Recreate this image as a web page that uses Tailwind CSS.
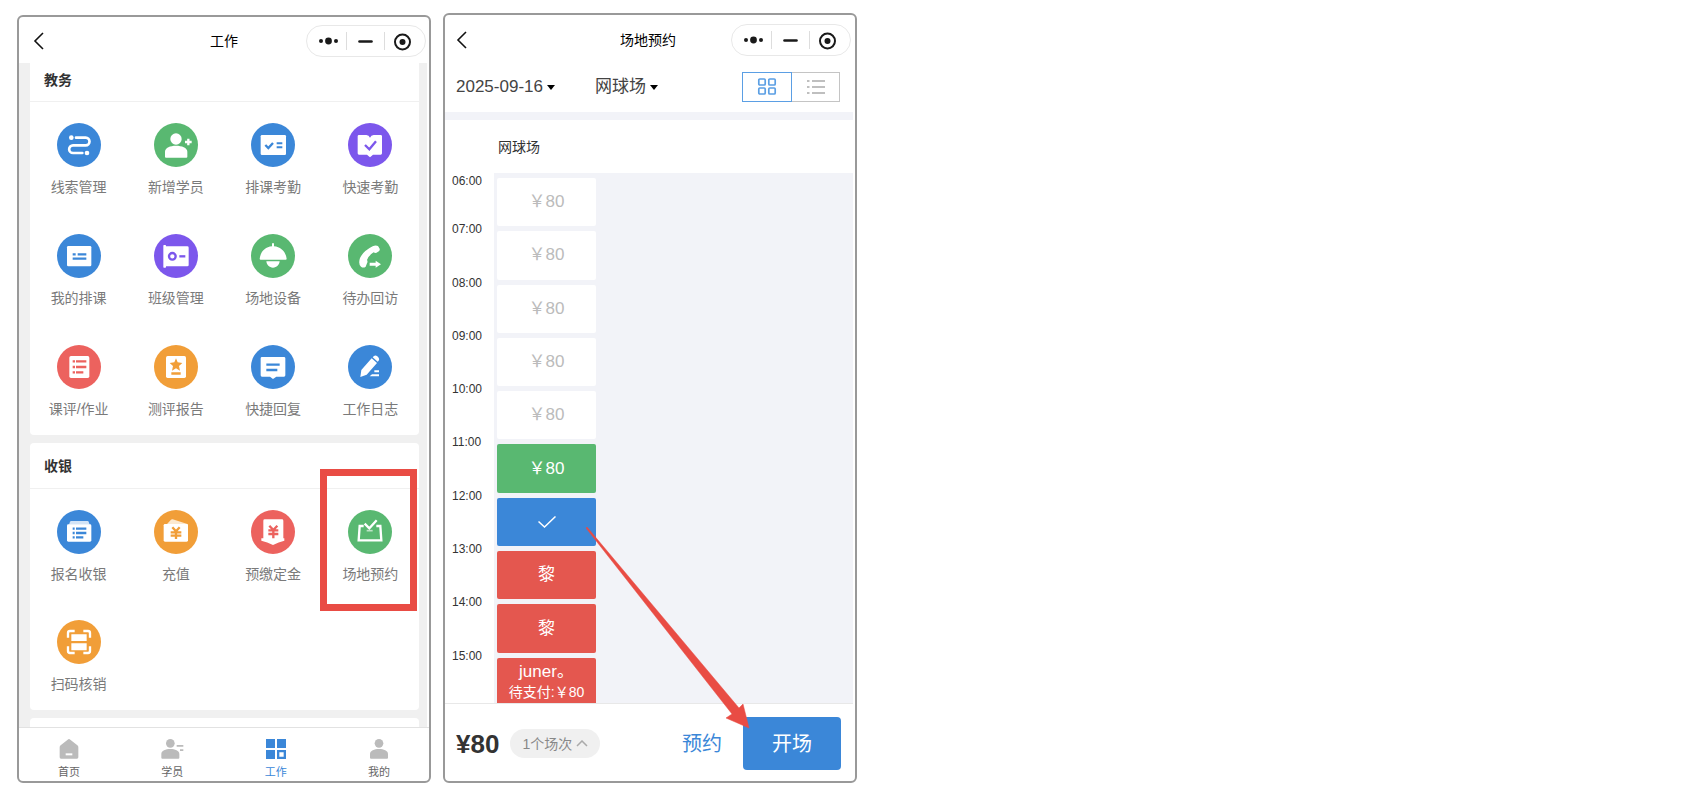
<!DOCTYPE html>
<html lang="zh-CN">
<head>
    <meta charset="UTF-8">
    <meta name="viewport" content="width=device-width, initial-scale=1.0">
    <title>场地预约</title>
    <script src="https://cdn.jsdelivr.net/npm/@tailwindcss/browser@4"></script>
</head>
<body class="bg-white font-['Liberation_Sans','Noto_Sans_CJK_SC',sans-serif] text-[#333]">
<main class="flex h-screen gap-3 pt-[13px] pb-[15px] pl-[17px]">

    <!-- work page -->
    <section class="mt-0.5 flex w-full max-w-[414px] flex-col overflow-hidden rounded-md border-2 border-[#999] bg-white">
        <header class="grid h-[46px] shrink-0 grid-cols-[1fr_auto_1fr] items-center px-[3px] pt-0.5">
            <button aria-label="返回" class="ml-[11px] justify-self-start">
                <svg class="h-[18px] w-3" viewBox="0 0 12 18" fill="none" stroke="#111" stroke-width="1.6"><path d="M10 1 2 9l8 8"/></svg>
            </button>
            <h1 class="text-sm text-black">工作</h1>
            <div class="flex h-8 w-[120px] items-center justify-self-end rounded-full border border-[#e8e8e8]">
                <svg class="w-full" viewBox="0 0 118 30" fill="#1a1a1a"><circle cx="14" cy="15" r="2"/><circle cx="21.500" cy="15" r="3.400"/><circle cx="29" cy="15" r="2"/><path d="M39.500 6v18M77.500 6v18" stroke="#ddd"/><path d="M52.500 15.500h12" stroke="#1a1a1a" stroke-width="2.600" stroke-linecap="round"/><circle cx="95.500" cy="16" r="7.500" fill="none" stroke="#1a1a1a" stroke-width="2"/><circle cx="95.500" cy="16" r="3"/></svg>
            </div>
        </header>

        <div class="mr-0.5 flex min-h-0 flex-1 flex-col gap-2 overflow-hidden bg-[#f0f0f0] pr-2 pl-[11px]">
            <div class="shrink-0 rounded-b bg-white pb-4">
                <h2 class="border-b border-[#f0f0f0] px-[14px] pt-[7px] pb-[11px] text-sm leading-5 font-bold">教务</h2>
                <div class="grid grid-cols-4 gap-y-[37px] pt-[21px] text-sm leading-5 text-[#7a7a7a]">
                    <a href="#" class="flex flex-col items-center gap-[10px]">
                        <svg class="size-11" viewBox="0 0 132 132"><circle cx="66" cy="66" r="66" fill="#3b87d8"/><path d="M57 44h29a11.500 11.500 0 0 1 0 23H48a11.500 11.500 0 0 0 0 23h28" fill="none" stroke="#fff" stroke-width="8" stroke-linecap="round"/><circle cx="43" cy="44" r="7" fill="#fff"/><circle cx="90" cy="90" r="7" fill="#fff"/></svg>
                        线索管理
                    </a>
                    <a href="#" class="flex flex-col items-center gap-[10px]">
                        <svg class="size-11" viewBox="0 0 132 132"><circle cx="66" cy="66" r="66" fill="#59b871"/><g fill="#fff"><circle cx="66" cy="48" r="17"/><path d="M33 101V86c0-12 16-18 33-18s34 6 34 18v15q0 3-3 3H36q-3 0-3-3z"/></g><path d="M103 47v20M93 57h20" stroke="#fff" stroke-width="7"/></svg>
                        新增学员
                    </a>
                    <a href="#" class="flex flex-col items-center gap-[10px]">
                        <svg class="size-11" viewBox="0 0 132 132"><circle cx="66" cy="66" r="66" fill="#3b87d8"/><rect x="29" y="36" width="76" height="60" rx="4" fill="#fff"/><path d="m43 66 9 9 14-15" fill="none" stroke="#3b87d8" stroke-width="7"/><path d="M77 61h17M77 73h17" stroke="#3b87d8" stroke-width="6"/></svg>
                        排课考勤
                    </a>
                    <a href="#" class="flex flex-col items-center gap-[10px]">
                        <svg class="size-11" viewBox="0 0 132 132"><circle cx="66" cy="66" r="66" fill="#7c57ec"/><path d="M33 36h22q8 0 11 8 3-8 11-8h21q4 0 4 4v51q0 4-4 4H75l-9 8-9-8H33q-4 0-4-4V40q0-4 4-4z" fill="#fff"/><path d="m51 66 13 13 20-24" fill="none" stroke="#7c57ec" stroke-width="7"/></svg>
                        快速考勤
                    </a>
                    <a href="#" class="flex flex-col items-center gap-[10px]">
                        <svg class="size-11" viewBox="0 0 132 132"><circle cx="66" cy="66" r="66" fill="#3b87d8"/><rect x="30" y="36" width="73" height="61" rx="4" fill="#fff"/><path d="M47 61h9M62 61h26M47 74h41" stroke="#3b87d8" stroke-width="7"/></svg>
                        我的排课
                    </a>
                    <a href="#" class="flex flex-col items-center gap-[10px]">
                        <svg class="size-11" viewBox="0 0 132 132"><circle cx="66" cy="66" r="66" fill="#7c57ec"/><g fill="#fff"><rect x="32" y="37" width="72" height="60" rx="4"/><rect x="28" y="33" width="8" height="68" rx="2"/></g><circle cx="55" cy="67" r="10" fill="none" stroke="#7c57ec" stroke-width="7"/><path d="M76 67h18" stroke="#7c57ec" stroke-width="7"/></svg>
                        班级管理
                    </a>
                    <a href="#" class="flex flex-col items-center gap-[10px]">
                        <svg class="size-11" viewBox="0 0 132 132"><circle cx="66" cy="66" r="66" fill="#59b871"/><g fill="#fff"><path d="M26 74c3-22 17-35 37-37v-9h6v9c20 2 35 15 38 37q0 3-3 3H29q-3 0-3-3zM46 82h40c-1 11-9 19-20 19s-19-8-20-19z"/></g></svg>
                        场地设备
                    </a>
                    <a href="#" class="flex flex-col items-center gap-[10px]">
                        <svg class="size-11" viewBox="0 0 132 132"><circle cx="66" cy="66" r="66" fill="#59b871"/><g fill="#fff"><path d="M74 37q9-5 16-1l5 8q2 6-6 10-6 5-12 1-15 9-20 23 3 5 0 10l-4 10q-7 5-14 0-9-8-3-26 10-21 38-35z"/><path d="M65 86h18v-6l16 11-16 10v-6H65z"/></g></svg>
                        待办回访
                    </a>
                    <a href="#" class="flex flex-col items-center gap-[10px]">
                        <svg class="size-11" viewBox="0 0 132 132"><circle cx="66" cy="66" r="66" fill="#ec625e"/><rect x="37" y="33" width="60" height="66" rx="5" fill="#fff"/><path d="M47 49h7M57 49h31M47 66h7M57 66h31M47 82h7M57 82h22" stroke="#ec625e" stroke-width="7"/></svg>
                        课评/作业
                    </a>
                    <a href="#" class="flex flex-col items-center gap-[10px]">
                        <svg class="size-11" viewBox="0 0 132 132"><circle cx="66" cy="66" r="66" fill="#f19e38"/><rect x="36" y="33" width="60" height="66" rx="5" fill="#fff"/><path d="m66 40 5 12 14 2-10 9 3 14-12-7-12 7 3-14-10-9 14-2zM52 82h28v7H52z" fill="#f19e38"/></svg>
                        测评报告
                    </a>
                    <a href="#" class="flex flex-col items-center gap-[10px]">
                        <svg class="size-11" viewBox="0 0 132 132"><circle cx="66" cy="66" r="66" fill="#3b87d8"/><path d="M33 36h66q4 0 4 4v51q0 4-4 4H76l-10 7-9-7H33q-4 0-4-4V40q0-4 4-4z" fill="#fff"/><path d="M46 59h40M46 75h33" stroke="#3b87d8" stroke-width="7"/></svg>
                        快捷回复
                    </a>
                    <a href="#" class="flex flex-col items-center gap-[10px]">
                        <svg class="size-11" viewBox="0 0 132 132"><circle cx="66" cy="66" r="66" fill="#3b87d8"/><g fill="#fff"><path d="m37 96 3-21 31-35 16 14-31 35zM74 37l4-4q5-3 10 1l4 4q3 5 0 9l-3 3z"/><path d="M79 76h14v6H79zM72 88h21v6H65z"/></g></svg>
                        工作日志
                    </a>
                </div>
            </div>

            <div class="shrink-0 rounded bg-white pb-4">
                <h2 class="border-b border-[#f0f0f0] px-[14px] pt-[13px] pb-3 text-sm leading-5 font-bold">收银</h2>
                <div class="grid grid-cols-4 gap-y-9 pt-[21px] text-sm leading-5 text-[#7a7a7a]">
                    <a href="#" class="flex flex-col items-center gap-[10px]">
                        <svg class="size-11" viewBox="0 0 132 132"><circle cx="66" cy="66" r="66" fill="#3b87d8"/><path d="m36 44 3-9q1-2 3-2h50q2 0 3 2l3 9z" fill="#d3e4f6"/><rect x="30" y="43" width="73" height="52" rx="4" fill="#fff"/><path d="M47 56h6M57 56h31M47 69h6M57 69h31M47 82h6M57 82h22" stroke="#3b87d8" stroke-width="7"/></svg>
                        报名收银
                    </a>
                    <a href="#" class="flex flex-col items-center gap-[10px]">
                        <svg class="size-11" viewBox="0 0 132 132"><circle cx="66" cy="66" r="66" fill="#f19e38"/><path d="m37 44 14-15q2-2 5-1l44 14 2 6z" fill="#fce9d0"/><rect x="29" y="42" width="73" height="53" rx="4" fill="#fff"/><path d="m55 52 11 12 11-12M66 64v23M50 67h32M50 77h32" fill="none" stroke="#f19e38" stroke-width="7"/></svg>
                        充值
                    </a>
                    <a href="#" class="flex flex-col items-center gap-[10px]">
                        <svg class="size-11" viewBox="0 0 132 132"><circle cx="66" cy="66" r="66" fill="#ec625e"/><path d="M41 28h52q4 0 4 4v53h3v7q-17 4-34 13-17-9-35-13v-7h6V32q0-4 4-4z" fill="#fff"/><path d="m55 47 12 13 12-13M67 60v25M52 61h30M52 72h30" fill="none" stroke="#ec625e" stroke-width="7"/></svg>
                        预缴定金
                    </a>
                    <a href="#" class="relative flex flex-col items-center gap-[10px]">
                        <svg class="size-11" viewBox="0 0 132 132"><circle cx="66" cy="66" r="66" fill="#59b871"/><g fill="none" stroke="#fff"><path d="M47 48H35l-3 43h68l-3-43H85" stroke-width="7"/><path d="m50 41 14 14 22-24" stroke-width="7"/><path d="M56 62h18" stroke-width="5" opacity=".6"/></g></svg>
                        场地预约
                        <!-- highlight frame -->
                        <span class="absolute -top-[41px] right-0.5 h-[142px] w-[97px] border-7 border-[#e94c44]"></span>
                    </a>
                    <a href="#" class="flex flex-col items-center gap-[10px]">
                        <svg class="size-11" viewBox="0 0 132 132"><circle cx="66" cy="66" r="66" fill="#f19e38"/><g fill="none" stroke="#fff" stroke-width="7"><path d="M33 53V39q0-6 6-6h14M79 33h14q6 0 6 6v14M99 79v14q0 6-6 6H79M53 99H39q-6 0-6-6V79"/></g><path d="M43 43h46v20H43zM43 70h46v21H43z" fill="#fff"/></svg>
                        扫码核销
                    </a>
                </div>
            </div>

            <div class="h-4 shrink-0 rounded-t bg-white"></div>
        </div>

        <nav class="flex h-[54px] shrink-0 justify-between border-t border-[#e2e2e2] px-[38px] pt-[11px] text-[11px] leading-4 text-[#666]">
            <a href="#" class="flex w-6 flex-col items-center gap-[5px]">
                <svg class="h-5 w-6 shrink-0" viewBox="0 0 72 60"><path d="M32 2q4-4 8 0l21 17q3 2 3 6v30q0 4-4 4H12q-4 0-4-4V25q0-4 3-6z" fill="#bbb"/><path d="M26 46h20" stroke="#fff" stroke-width="6"/></svg>
                首页
            </a>
            <a href="#" class="flex w-6 flex-col items-center gap-[5px]">
                <svg class="h-5 w-6 shrink-0" viewBox="0 0 72 60" fill="#bbb"><circle cx="31" cy="13" r="13"/><path d="M4 56V45c0-10 13-15 27-15s27 5 27 15v11q0 3-3 3H7q-3 0-3-3zM50 18h20v5H50zM60 31h10v5H60z"/></svg>
                学员
            </a>
            <a href="#" class="flex w-6 flex-col items-center gap-[5px] text-[#3b87d8]">
                <svg class="h-5 w-6 shrink-0" viewBox="0 0 72 60" fill="#3b87d8"><path d="M6 0h27v27H6zM39 0h27v27H39zM6 33h27v27H6z"/><path d="M42.500 36.500h20v20h-20z" fill="#fff" stroke="#3b87d8" stroke-width="7"/></svg>
                工作
            </a>
            <a href="#" class="flex w-6 flex-col items-center gap-[5px]">
                <svg class="h-5 w-6 shrink-0" viewBox="0 0 72 60" fill="#bbb"><circle cx="36" cy="13" r="13"/><path d="M9 56V45c0-10 13-15 27-15s27 5 27 15v11q0 3-3 3H12q-3 0-3-3z"/></svg>
                我的
            </a>
        </nav>
    </section>

    <!-- court booking page -->
    <section class="relative flex w-full max-w-[414px] flex-col overflow-hidden rounded-md border-2 border-[#999] bg-white">
        <header class="grid h-[47px] shrink-0 grid-cols-[1fr_auto_1fr] items-center pt-0.5 pr-1">
            <button aria-label="返回" class="ml-[11px] justify-self-start">
                <svg class="h-[18px] w-3" viewBox="0 0 12 18" fill="none" stroke="#111" stroke-width="1.6"><path d="M10 1 2 9l8 8"/></svg>
            </button>
            <h1 class="text-sm text-black">场地预约</h1>
            <div class="flex h-8 w-[120px] items-center justify-self-end rounded-full border border-[#e8e8e8]">
                <svg class="w-full" viewBox="0 0 118 30" fill="#1a1a1a"><circle cx="14" cy="15" r="2"/><circle cx="21.500" cy="15" r="3.400"/><circle cx="29" cy="15" r="2"/><path d="M39.500 6v18M77.500 6v18" stroke="#ddd"/><path d="M52.500 15.500h12" stroke="#1a1a1a" stroke-width="2.600" stroke-linecap="round"/><circle cx="95.500" cy="16" r="7.500" fill="none" stroke="#1a1a1a" stroke-width="2"/><circle cx="95.500" cy="16" r="3"/></svg>
            </div>
        </header>

        <div class="mr-0.5 flex shrink-0 items-center border-b-8 border-[#f2f3f8] pt-[10px] pr-[13px] pb-[10px] pl-[11px] text-[17px] leading-[30px] text-[#444]">
            <button class="flex items-center gap-1">2025-09-16
                <svg class="size-2" viewBox="0 0 8 8"><path d="M0 2h8L4 7z" fill="#000"/></svg>
            </button>
            <button class="ml-10 flex items-center gap-1">网球场
                <svg class="size-2" viewBox="0 0 8 8"><path d="M0 2h8L4 7z" fill="#000"/></svg>
            </button>
            <div class="ml-auto flex">
                <button aria-label="网格" class="flex h-[30px] w-[50px] items-center justify-center border border-[#5b9fe4]">
                    <svg class="size-5" viewBox="0 0 20 20" fill="none" stroke="#5b9fe4" stroke-width="1.700"><rect x="1.800" y="2" width="6.400" height="6" rx="1"/><rect x="11.800" y="2" width="6.400" height="6" rx="1"/><rect x="1.800" y="11" width="6.400" height="6" rx="1"/><rect x="11.800" y="11" width="6.400" height="6" rx="1"/></svg>
                </button>
                <button aria-label="列表" class="flex h-[30px] w-12 items-center justify-center border border-l-0 border-[#c4c4c4]">
                    <svg class="size-5" viewBox="0 0 20 20" stroke="#aaa" stroke-width="1.500"><path d="M1 4h2.500M6 4h13M1 10h2.500M6 10h13M1 16h2.500M6 16h13"/></svg>
                </button>
            </div>
        </div>

        <h2 class="shrink-0 pt-[17px] pb-4 pl-[53px] text-sm leading-5">网球场</h2>

        <div class="mr-0.5 flex min-h-0 flex-1 overflow-hidden">
            <div class="grid h-[538px] w-[49px] shrink-0 grid-rows-10 pt-[5px] pl-[7px] text-xs leading-4">
                <time class="-mt-[5px]">06:00</time>
                <time class="-mt-[10px]">07:00</time>
                <time class="-mt-[10px]">08:00</time>
                <time class="-mt-[10px]">09:00</time>
                <time class="-mt-[10px]">10:00</time>
                <time class="-mt-[10px]">11:00</time>
                <time class="-mt-[10px]">12:00</time>
                <time class="-mt-[10px]">13:00</time>
                <time class="-mt-[10px]">14:00</time>
                <time class="-mt-[10px]">15:00</time>
            </div>
            <div class="h-[538px] flex-1 bg-[#f2f3f8] py-[5px] pl-[3px]">
                <div class="grid h-full w-[99px] grid-rows-10 gap-y-[5px] text-[17px] leading-5 text-white">
                    <button class="rounded-xs bg-white text-[#bbb]">￥80</button>
                    <button class="rounded-xs bg-white text-[#bbb]">￥80</button>
                    <button class="rounded-xs bg-white text-[#bbb]">￥80</button>
                    <button class="rounded-xs bg-white text-[#bbb]">￥80</button>
                    <button class="rounded-xs bg-white text-[#bbb]">￥80</button>
                    <button class="rounded-xs bg-[#59b871]">￥80</button>
                    <button aria-label="已选" class="flex items-center justify-center rounded-xs bg-[#3b87d8]">
                        <svg class="h-3 w-[18px]" viewBox="0 0 18 12" fill="none" stroke="#fff" stroke-width="1.500"><path d="m.500 5.500 6 5.500L17.500.500"/></svg>
                    </button>
                    <button class="rounded-xs bg-[#e4574f]">黎</button>
                    <button class="rounded-xs bg-[#e4574f]">黎</button>
                    <button class="rounded-xs bg-[#e4574f]">juner。<span class="block text-sm leading-5">待支付:￥80</span></button>
                </div>
            </div>
        </div>

        <footer class="mr-0.5 flex h-[78px] shrink-0 items-center border-t border-[#e8e8e8] pt-0.5 pr-3 pl-[11px]">
            <strong class="text-[26px] leading-8">¥80</strong>
            <button class="ml-[11px] flex h-[29px] w-[90px] items-center justify-center gap-1 rounded-full bg-[#f0f0f0] text-sm text-[#888]">1个场次
                <svg class="h-[7px] w-3" viewBox="0 0 12 7" fill="none" stroke="#aaa" stroke-width="1.500"><path d="m1 6 5-5 5 5"/></svg>
            </button>
            <button class="ml-auto text-xl text-[#3b87d8]">预约</button>
            <button class="ml-[21px] h-[53px] w-[98px] rounded bg-[#3b87d8] text-xl text-white">开场</button>
        </footer>

        <!-- arrow from the picked slot to the open button -->
        <svg class="pointer-events-none absolute top-[512px] left-[141px] h-[202px] w-[164px]" viewBox="0 0 164 202"><path d="M0 1 1 0l152 181 4-4 6 24-23-10 6-4z" fill="#e94c44" stroke="#e94c44" stroke-width=".5"/></svg>
    </section>

</main>
</body>
</html>
